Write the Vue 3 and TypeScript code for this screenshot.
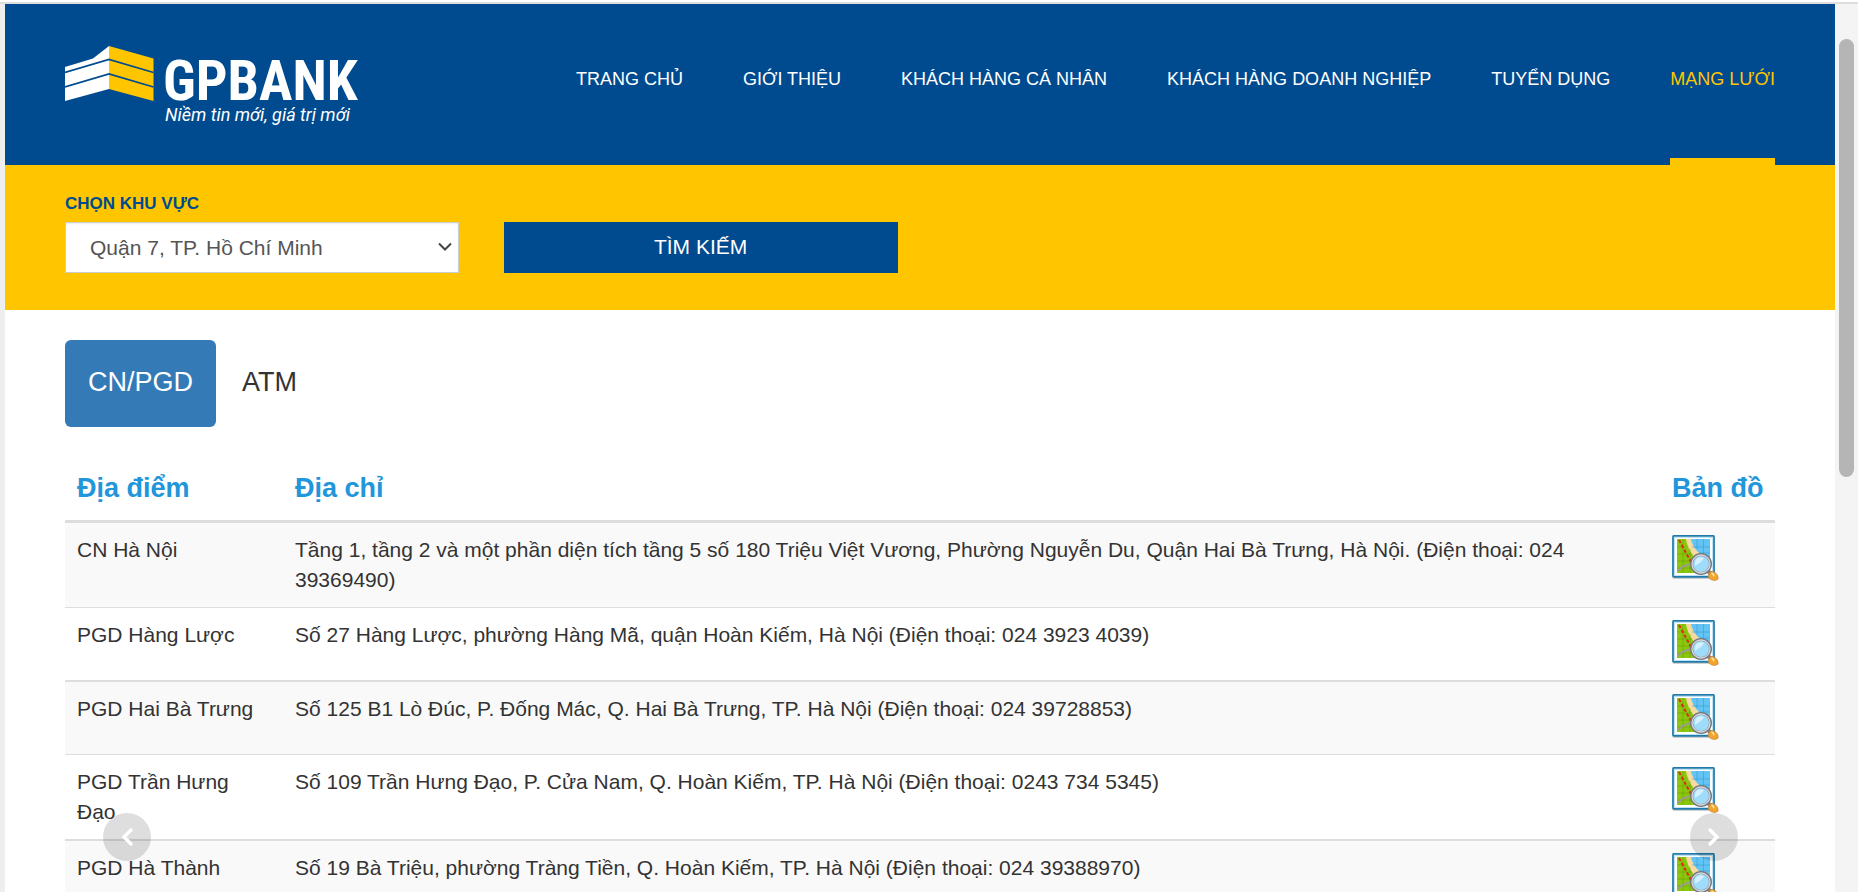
<script setup lang="ts">
import { ref } from 'vue'

interface NavItem {
  label: string
  active?: boolean
}

interface Branch {
  name: string
  address: string
}

const navItems: NavItem[] = [
  { label: 'TRANG CHỦ' },
  { label: 'GIỚI THIỆU' },
  { label: 'KHÁCH HÀNG CÁ NHÂN' },
  { label: 'KHÁCH HÀNG DOANH NGHIỆP' },
  { label: 'TUYỂN DỤNG' },
  { label: 'MẠNG LƯỚI', active: true },
]

const tabs = ['CN/PGD', 'ATM']
const activeTab = ref('CN/PGD')

const areas = ['Quận 7, TP. Hồ Chí Minh']
const area = ref(areas[0])

const branches: Branch[] = [
  {
    name: 'CN Hà Nội',
    address:
      'Tầng 1, tầng 2 và một phần diện tích tầng 5 số 180 Triệu Việt Vương, Phường Nguyễn Du, Quận Hai Bà Trưng, Hà Nội. (Điện thoại: 024 39369490)',
  },
  {
    name: 'PGD Hàng Lược',
    address: 'Số 27 Hàng Lược, phường Hàng Mã, quận Hoàn Kiếm, Hà Nội (Điện thoại: 024 3923 4039)',
  },
  {
    name: 'PGD Hai Bà Trưng',
    address: 'Số 125 B1 Lò Đúc, P. Đống Mác, Q. Hai Bà Trưng, TP. Hà Nội (Điện thoại: 024 39728853)',
  },
  {
    name: 'PGD Trần Hưng Đạo',
    address: 'Số 109 Trần Hưng Đạo, P. Cửa Nam, Q. Hoàn Kiếm, TP. Hà Nội (Điện thoại: 0243 734 5345)',
  },
  {
    name: 'PGD Hà Thành',
    address: 'Số 19 Bà Triệu, phường Tràng Tiền, Q. Hoàn Kiếm, TP. Hà Nội (Điện thoại: 024 39388970)',
  },
]
</script>

<template>
  <div class="window">
    <div class="top-edge"></div>
    <div class="viewport">
      <div class="left-edge"></div>
      <div class="page">
        <header class="header">
          <a class="logo" href="#">
            <svg width="296" height="82" viewBox="0 0 296 82">
              <path d="M0 21 L28 12.500 L44 0 V43 L0 55 Z" fill="#fff" />
              <path d="M44 0 L88.500 12.500 V55 L44 43 Z" fill="#ffc600" />
              <path
                d="M0 26.500 L44 13.500 L88.500 26.500 M0 41 L44 28 L88.500 41"
                fill="none"
                stroke="#004b8f"
                stroke-width="1.800"
              />
              <text class="brand" x="98" y="54">GPBANK</text>
              <text class="slogan" x="100" y="75">Niềm tin mới, giá trị mới</text>
            </svg>
          </a>
          <nav class="nav">
            <a
              v-for="item in navItems"
              :key="item.label"
              href="#"
              class="nav-link"
              :class="{ active: item.active }"
              >{{ item.label }}</a
            >
          </nav>
        </header>

        <form class="search" @submit.prevent>
          <div class="field">
            <label class="field-label" for="area">CHỌN KHU VỰC</label>
            <div class="select-wrap">
              <select id="area" v-model="area" class="select">
                <option v-for="a in areas" :key="a">{{ a }}</option>
              </select>
              <svg class="chevron" width="14" height="10" viewBox="0 0 14 10">
                <path d="M1 1.500 L7 7.500 L13 1.500" fill="none" stroke="#444" stroke-width="2" />
              </svg>
            </div>
          </div>
          <button class="search-button" type="submit">TÌM KIẾM</button>
        </form>

        <main class="content">
          <div class="tabs">
            <button
              v-for="tab in tabs"
              :key="tab"
              type="button"
              class="tab"
              :class="{ active: tab === activeTab }"
              @click="activeTab = tab"
            >
              {{ tab }}
            </button>
          </div>

          <table class="branches">
            <thead>
              <tr>
                <th class="col-name">Địa điểm</th>
                <th>Địa chỉ</th>
                <th class="col-map">Bản đồ</th>
              </tr>
            </thead>
            <tbody>
              <tr v-for="b in branches" :key="b.name">
                <td>{{ b.name }}</td>
                <td>{{ b.address }}</td>
                <td>
                  <a class="map-link" href="#" :aria-label="b.name">
                    <svg width="48" height="48" viewBox="0 0 48 48">
                      <rect x="0" y="2" width="43" height="42" rx="2" fill="#000" opacity="0.18" />
                      <rect x="1" y="0.800" width="41" height="41" rx="1" fill="#fff" stroke="#1f7bab" stroke-width="1.700" />
                      <rect x="2.500" y="2.500" width="38" height="38" fill="none" stroke="#bfe3f4" />
                      <rect x="5" y="4" width="33" height="34" fill="#8cc70f" />
                      <path d="M18 4 H38 V31 C31 24 21 17 18 4 Z" fill="#62c4f5" />
                      <path d="M14 4 H19 C21 14 27 18 36 25 L32 31 C23 24 16 16 14 4 Z" fill="#f8d9a0" />
                      <path
                        d="M11 4 V38 M18 14 V38 M25 22 V38 M5 12 H14 M5 19 H20 M5 26 H26 M5 33 H38"
                        fill="none"
                        stroke="#5e9a08"
                        stroke-width="0.800"
                        opacity="0.600"
                      />
                      <path
                        d="M25 4 V14 M31.500 4 V20 M20 12 H38 M27 18 H38"
                        fill="none"
                        stroke="#3999cf"
                        stroke-width="0.800"
                        opacity="0.700"
                      />
                      <path d="M6 36 C9 32 13 30 20 29" fill="none" stroke="#9b9b8c" stroke-width="2" />
                      <path d="M7 5 L19 27" fill="none" stroke="#dd2c10" stroke-width="2" stroke-dasharray="3.500 2" />
                      <path d="M35 35 L39 39" stroke="#85858a" stroke-width="4" />
                      <circle cx="29" cy="29" r="9.500" fill="#9fdcfa" stroke="#77787c" stroke-width="3" />
                      <circle cx="29" cy="29" r="9" fill="none" stroke="#d8d8dc" stroke-width="1.300" />
                      <path d="M23 28 C23 23 28 21 32 23 C30 27 27 28 23 31 Z" fill="#d5f0ff" />
                      <path
                        d="M38 37 C42 35 47 40 46 44 C43 47 37 45 36 41 Z"
                        fill="#f3a42c"
                        stroke="#b8772b"
                        stroke-width="0.600"
                      />
                      <path d="M39 38 C42 37 43 40 42 42 Z" fill="#ffe2a3" />
                    </svg>
                  </a>
                </td>
              </tr>
            </tbody>
          </table>
        </main>

        <button type="button" class="arrow prev">
          <svg width="14" height="20" viewBox="0 0 14 20">
            <path d="M11 3 L4 10 L11 17" fill="none" stroke="#fff" stroke-width="3.500" stroke-linecap="round" />
          </svg>
        </button>
        <button type="button" class="arrow next">
          <svg width="14" height="20" viewBox="0 0 14 20">
            <path d="M3 3 L10 10 L3 17" fill="none" stroke="#fff" stroke-width="3.500" stroke-linecap="round" />
          </svg>
        </button>
      </div>
      <div class="scrollbar"><div class="thumb"></div></div>
    </div>
  </div>
</template>

<style>
body {
  margin: 0;
  background: #fff;
}
</style>

<style scoped>
.window {
  display: flex;
  flex-direction: column;
  height: 100vh;
  overflow: hidden;
  font-family: 'Liberation Sans', Arial, sans-serif;
  font-size: 21px;
  line-height: 30px;
  color: #333;
}
.window * {
  box-sizing: border-box;
}
.window .top-edge {
  flex: none;
  height: 4px;
  border-bottom: 2px solid #ddd;
}
.viewport {
  flex: 1;
  min-height: 0;
  display: flex;
}
.left-edge {
  flex: none;
  width: 5px;
  background: #eee;
}
.page {
  position: relative;
  flex: 1;
  min-width: 0;
  overflow: hidden;
}
.header {
  display: flex;
  justify-content: space-between;
  height: 161px;
  padding: 0 60px;
  background: #004b8f;
}
.logo {
  padding-top: 42px;
}
.logo svg {
  display: block;
}
.brand {
  font: bold 56px 'Liberation Sans Narrow', 'Roboto Condensed', Roboto, sans-serif;
  fill: #fff;
}
.slogan {
  font: italic 18px Roboto, sans-serif;
  fill: #fff;
}
.nav {
  display: flex;
  gap: 60px;
}
.nav-link {
  padding-top: 62px;
  border-bottom: 7px solid transparent;
  font-size: 18px;
  line-height: 26px;
  color: #fff;
  text-decoration: none;
  white-space: nowrap;
}
.nav-link.active {
  color: #ffc600;
  border-bottom-color: #ffc600;
}
.search {
  display: grid;
  grid-template-columns: repeat(4, 1fr);
  column-gap: 45px;
  align-items: end;
  padding: 27px 60px 37px;
  background: #ffc600;
}
.field-label {
  display: block;
  margin-bottom: 6px;
  font-size: 17px;
  font-weight: bold;
  line-height: 24px;
  color: #004b8f;
}
.select-wrap {
  position: relative;
}
.select {
  display: block;
  width: 100%;
  height: 51px;
  padding: 0 36px 0 24px;
  border: 1px solid #ccc;
  border-radius: 0;
  background: #fff;
  box-shadow: inset 0 1px 2px rgba(0, 0, 0, 0.08);
  appearance: none;
  font: inherit;
  color: #555;
}
.chevron {
  position: absolute;
  right: 7px;
  top: 20px;
  pointer-events: none;
}
.search-button {
  height: 51px;
  padding: 0 0 2px;
  border: 0;
  background: #004b8f;
  font: inherit;
  color: #fff;
}
.content {
  padding: 30px 60px 0;
}
.tabs {
  display: flex;
  gap: 3px;
  margin-bottom: 30px;
}
.tab {
  height: 87px;
  padding: 0 23px 3px;
  border: 0;
  border-radius: 6px;
  background: transparent;
  font: inherit;
  font-size: 27px;
  color: #333;
}
.tab.active {
  background: #337ab7;
  color: #fff;
}
.branches {
  width: 100%;
  table-layout: fixed;
  border-collapse: separate;
  border-spacing: 0;
}
.branches th {
  padding: 12px;
  border-bottom: 3px solid #ddd;
  font-size: 27px;
  line-height: 39px;
  text-align: left;
  white-space: nowrap;
  color: #2196db;
}
.branches .col-name {
  width: 218px;
}
.branches .col-map {
  width: 115px;
}
.branches td {
  padding: 12px;
  border-top: 1px solid #ddd;
  vertical-align: top;
}
.branches tbody tr:nth-child(odd) td {
  border-top-width: 2px;
  background: #f9f9f9;
}
.branches tbody tr:first-child td {
  border-top: 0;
}
.map-link,
.map-link svg {
  display: block;
}
.arrow {
  position: absolute;
  bottom: 31px;
  display: flex;
  align-items: center;
  justify-content: center;
  width: 48px;
  height: 48px;
  padding: 0;
  border: 0;
  border-radius: 50%;
  background: rgba(0, 0, 0, 0.13);
}
.prev {
  left: 98px;
}
.next {
  right: 97px;
}
.scrollbar {
  flex: none;
  width: 23px;
  padding: 35px 4px 0;
  background: #f4f4f4;
}
.thumb {
  width: 15px;
  height: 438px;
  border-radius: 8px;
  background: #b5b5b5;
}
</style>
